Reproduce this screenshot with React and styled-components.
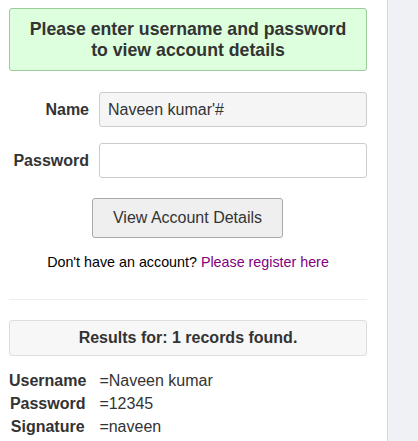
import styled, { createGlobalStyle } from 'styled-components';

const GlobalStyle = createGlobalStyle`
  html, body {
    margin: 0;
    padding: 0;
    background: #fff;
  }
  body {
    font-family: "Liberation Sans", Arial, sans-serif;
    color: #333;
  }
`;

const Page = styled.div`
  display: flex;
  width: 418px;
  height: 441px;
  overflow: hidden;
`;

const Main = styled.div`
  width: 387px;
  flex-shrink: 0;
  padding: 8px 20px 0 9px;
  box-sizing: border-box;
`;

const Sidebar = styled.div`
  flex: 1;
  background: #f0f1f5;
  border-left: 1px solid #d6d6db;
`;

const Notice = styled.div`
  border: 1px solid #9c9;
  background: #dfd;
  border-radius: 3px;
  height: 63px;
  box-sizing: border-box;
  display: flex;
  align-items: center;
  justify-content: center;
  text-align: center;
  font-weight: 700;
  font-size: 17.7px;
  line-height: 21px;
  color: #333;
`;

const Form = styled.form`
  display: flex;
  flex-direction: column;
  gap: 16px;
  margin-top: 21px;
`;

const Row = styled.div`
  display: flex;
  align-items: center;
`;

const Label = styled.label`
  width: 80px;
  text-align: right;
  padding-right: 10px;
  font-weight: 700;
  font-size: 16px;
  color: #333;
`;

const Input = styled.input`
  flex: 1;
  height: 35px;
  box-sizing: border-box;
  border: 1px solid #ccc;
  border-radius: 3px;
  padding: 0 8px;
  font-family: inherit;
  font-size: 16px;
  color: #333;
  background: ${({ filled }) => (filled ? '#f5f5f5' : '#fff')};
  outline: none;
`;

const Button = styled.button`
  align-self: flex-start;
  margin-left: 83px;
  margin-top: 4px;
  width: 191px;
  height: 40px;
  border: 1px solid #aaa;
  border-radius: 3px;
  background: #efefef;
  font-family: inherit;
  font-size: 16px;
  color: #333;
`;

const Register = styled.p`
  margin: 16px 0 0;
  text-align: center;
  font-size: 14.3px;
  color: #000;

  a {
    color: #800080;
    text-decoration: none;
  }
`;

const Divider = styled.hr`
  border: 0;
  border-top: 1px solid #eee;
  margin: 29px 0 0;
`;

const ResultsBox = styled.div`
  margin-top: 20px;
  height: 36px;
  box-sizing: border-box;
  border: 1px solid #ddd;
  border-radius: 3px;
  background: #f7f7f7;
  display: flex;
  align-items: center;
  justify-content: center;
  font-weight: 700;
  font-size: 16px;
  color: #333;
`;

const Details = styled.table`
  margin-top: 13px;
  border-collapse: collapse;
  font-size: 16px;
  color: #333;

  th {
    font-weight: 700;
    padding: 0 13px 0 0;
    text-align: center;
    height: 23px;
  }

  td {
    padding: 0;
  }
`;

const records = [
  ['Username', '=Naveen kumar'],
  ['Password', '=12345'],
  ['Signature', '=naveen'],
];

export default function App() {
  return (
    <>
      <GlobalStyle />
      <Page>
        <Main>
          <Notice>
            Please enter username and password
            <br />
            to view account details
          </Notice>
          <Form onSubmit={(e) => e.preventDefault()}>
            <Row>
              <Label>Name</Label>
              <Input filled defaultValue="Naveen kumar'#" />
            </Row>
            <Row>
              <Label>Password</Label>
              <Input type="password" />
            </Row>
            <Button type="submit">View Account Details</Button>
          </Form>
          <Register>
            Don't have an account? <a href="#register">Please register here</a>
          </Register>
          <Divider />
          <ResultsBox>Results for: 1 records found.</ResultsBox>
          <Details>
            <tbody>
              {records.map(([k, v]) => (
                <tr key={k}>
                  <th>{k}</th>
                  <td>{v}</td>
                </tr>
              ))}
            </tbody>
          </Details>
        </Main>
        <Sidebar />
      </Page>
    </>
  );
}
